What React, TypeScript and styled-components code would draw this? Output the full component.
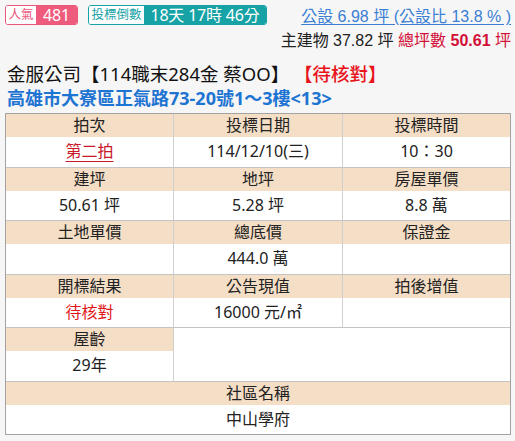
import React from "react";
import styled, { createGlobalStyle } from "styled-components";

const GlobalStyle = createGlobalStyle`
  html, body { margin: 0; padding: 0; background: #f6f6f6; }
  body { font-family: "Noto Sans", "Noto Sans CJK TC", sans-serif; color: #222; }
`;

const Page = styled.div`
  width: 515px;
  height: 441px;
  box-sizing: border-box;
  padding: 5px 4px 0 5px;
  overflow: hidden;
`;

const TopBar = styled.div`
  display: flex;
  justify-content: space-between;
  align-items: flex-start;
  height: 54px;
`;

const Badges = styled.div`
  display: flex;
  gap: 10px;
`;

const Badge = styled.div<{ $color: string }>`
  display: flex;
  height: 20px;
  box-sizing: border-box;
  border: 1px solid ${(p) => p.$color};
  border-radius: 3px;
  overflow: hidden;
`;

const BadgeLabel = styled.span<{ $color: string; $w: number }>`
  width: ${(p) => p.$w}px;
  display: flex;
  align-items: center;
  justify-content: center;
  white-space: nowrap;
  background: #fff;
  color: ${(p) => p.$color};
  font-size: 12.5px;
  line-height: 18px;
`;

const BadgeValue = styled.span<{ $color: string; $w: number; $size: number }>`
  width: ${(p) => p.$w}px;
  display: flex;
  align-items: center;
  justify-content: center;
  white-space: nowrap;
  background: ${(p) => p.$color};
  color: #fff;
  font-size: ${(p) => p.$size}px;
  line-height: 18px;
  letter-spacing: -0.2px;
`;

const Summary = styled.div`
  display: flex;
  flex-direction: column;
  align-items: flex-end;
  font-family: "Liberation Sans", "Noto Sans CJK TC", sans-serif;
  font-size: 16px;
  line-height: 19px;
  padding-top: 2px;
  gap: 5px;
`;

const PublicArea = styled.a`
  color: #3a7fd4;
  text-decoration: underline;
  text-underline-offset: 2px;
`;

const AreaLine = styled.div`
  color: #222;
`;

const Red = styled.span<{ $bold?: boolean }>`
  color: #d21038;
  font-weight: ${(p) => (p.$bold ? 700 : 400)};
`;

const Title = styled.div`
  font-size: 18.5px;
  line-height: 24px;
  color: #111;
  margin-top: 3px;
  padding-left: 2px;
  white-space: nowrap;
`;

const Status = styled.span`
  color: #e8141c;
  font-weight: 500;
  margin-left: 14px;
`;

const Address = styled.div`
  font-size: 18px;
  line-height: 24px;
  font-weight: 700;
  color: #1e74d2;
  padding-left: 2px;
  white-space: nowrap;
`;

const Table = styled.div`
  margin-top: 3px;
  width: 506px;
  box-sizing: border-box;
  border: 1px solid #a3a3a3;
  background: #fff;
  display: grid;
  grid-template-columns: 168px 169px 1fr;
`;

const Cell = styled.div<{ $span?: number; $last?: boolean; $bottom?: boolean }>`
  grid-column: span ${(p) => p.$span ?? 1};
  display: flex;
  flex-direction: column;
  border-right: ${(p) => (p.$last ? "none" : "1px solid #cfcfcf")};
  border-bottom: ${(p) => (p.$bottom ? "none" : "1px solid #c4c4c4")};
`;

const Head = styled.div`
  height: 23px;
  line-height: 23px;
  background: #f5dec6;
  text-align: center;
  font-size: 16px;
  color: #222;
`;

const Value = styled.div<{ $color?: string; $underline?: boolean }>`
  height: 29.5px;
  line-height: 29px;
  text-align: center;
  font-size: 16px;
  color: ${(p) => p.$color ?? "#222"};
  text-decoration: ${(p) => (p.$underline ? "underline" : "none")};
  text-underline-offset: 4px;
`;

type Item = { head: string; value: string; color?: string; underline?: boolean };

const rows: Item[][] = [
  [
    { head: "拍次", value: "第二拍", color: "#c8182a", underline: true },
    { head: "投標日期", value: "114/12/10(三)" },
    { head: "投標時間", value: "10：30" },
  ],
  [
    { head: "建坪", value: "50.61 坪" },
    { head: "地坪", value: "5.28 坪" },
    { head: "房屋單價", value: "8.8 萬" },
  ],
  [
    { head: "土地單價", value: "" },
    { head: "總底價", value: "444.0 萬" },
    { head: "保證金", value: "" },
  ],
  [
    { head: "開標結果", value: "待核對", color: "#e01818" },
    { head: "公告現值", value: "16000 元/㎡" },
    { head: "拍後增值", value: "" },
  ],
];

export default function App() {
  return (
    <>
      <GlobalStyle />
      <Page>
        <TopBar>
          <Badges>
            <Badge $color="#e9577b">
              <BadgeLabel $color="#e9577b" $w={30}>人氣</BadgeLabel>
              <BadgeValue $color="#ef5b7d" $w={41} $size={16}>481</BadgeValue>
            </Badge>
            <Badge $color="#17a3a6">
              <BadgeLabel $color="#17a3a6" $w={55}>投標倒數</BadgeLabel>
              <BadgeValue $color="#17a3a6" $w={122} $size={16}>18天 17時 46分</BadgeValue>
            </Badge>
          </Badges>
          <Summary>
            <PublicArea>公設 6.98 坪 (公設比 13.8 % )</PublicArea>
            <AreaLine>
              主建物 37.82 坪 <Red>總坪數</Red> <Red $bold>50.61</Red> <Red>坪</Red>
            </AreaLine>
          </Summary>
        </TopBar>
        <Title>
          金服公司【114職末284金 蔡OO】<Status>【待核對】</Status>
        </Title>
        <Address>高雄市大寮區正氣路73-20號1～3樓&lt;13&gt;</Address>
        <Table>
          {rows.map((row, ri) =>
            row.map((it, ci) => (
              <Cell key={`${ri}-${ci}`} $last={ci === 2}>
                <Head>{it.head}</Head>
                <Value $color={it.color} $underline={it.underline}>
                  {it.value}
                </Value>
              </Cell>
            ))
          )}
          <Cell>
            <Head>屋齡</Head>
            <Value>29年</Value>
          </Cell>
          <Cell $span={2} $last />
          <Cell $span={3} $last $bottom>
            <Head>社區名稱</Head>
            <Value>中山學府</Value>
          </Cell>
        </Table>
      </Page>
    </>
  );
}
